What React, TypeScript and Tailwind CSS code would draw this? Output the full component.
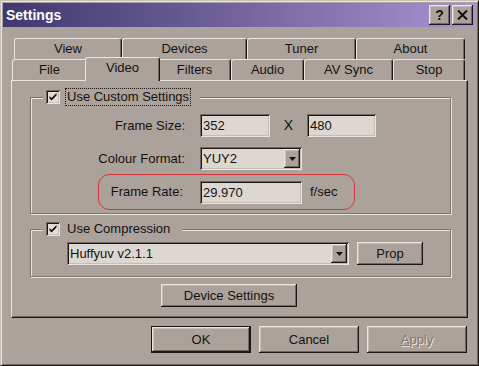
const raised =
  'shadow-[inset_-1px_-1px_0_#1c1714,inset_1px_1px_0_#ece6e0,inset_-2px_-2px_0_#706961,inset_2px_2px_0_#c4bdb6]';
const sunken =
  'shadow-[inset_1px_1px_0_#706961,inset_-1px_-1px_0_#ece6e0,inset_2px_2px_0_#1c1714,inset_-2px_-2px_0_#c4bdb6]';

function Tab({ label, w, sel }: { label: string; w: string; sel?: boolean }) {
  if (sel) {
    return (
      <div
        className={`${w} relative z-10 -mx-[2px] -mt-[2px] -mb-[1px] h-[24px] pb-[3px] flex items-center justify-center bg-[#aba39b] border-t border-l border-r border-t-[#ece6e0] border-l-[#ece6e0] border-r-[#1c1714] rounded-t-[3px] shadow-[inset_-1px_0_0_#706961]`}
      >
        {label}
      </div>
    );
  }
  return (
    <div
      className={`${w} h-[21px] flex items-center justify-center bg-[#aba39b] border-t border-l border-r border-t-[#ece6e0] border-l-[#ece6e0] border-r-[#1c1714] rounded-t-[3px] shadow-[inset_-1px_0_0_#706961]`}
    >
      {label}
    </div>
  );
}

function Check() {
  return (
    <div className={`w-[14px] h-[14px] bg-[#e2dcd6] ${sunken} flex items-center justify-center`}>
      <svg width="14" height="14" viewBox="0 0 14 14">
        <path d="M3.5 6 L3.5 8.5 L5.5 10.5 L10.5 5.5 L10.5 3 L5.5 8 Z" fill="#111" />
      </svg>
    </div>
  );
}

function Field({ w, value }: { w: string; value: string }) {
  return (
    <div className={`${w} h-[23px] bg-[#ddd7d1] ${sunken} flex items-center pl-[3px] pt-[1px]`}>{value}</div>
  );
}

function Combo({ w, value }: { w: string; value: string }) {
  return (
    <div className={`${w} h-[23px] bg-[#ddd7d1] ${sunken} flex items-center pl-[3px] pr-[2px]`}>
      <span className="flex-1 pt-[1px]">{value}</span>
      <div className={`w-[16px] h-[19px] bg-[#aba39b] ${raised} flex items-center justify-center`}>
        <svg width="7" height="4" viewBox="0 0 7 4">
          <polygon points="0,0 7,0 3.5,4" fill="#111" />
        </svg>
      </div>
    </div>
  );
}

export default function App() {
  return (
    <div className="w-[479px] h-[366px] bg-[#aba39b] border border-[#c8c1ba] border-r-[#1c1714] border-b-[#1c1714] shadow-[inset_1px_1px_0_#ece6e0,inset_-1px_-1px_0_#706961] p-[2px] font-['Liberation_Sans',Arial,sans-serif] text-[13px] text-[#141210] overflow-hidden">
      <div className="h-[24px] flex items-center bg-gradient-to-r from-[#42386e] to-[#a893d2] pl-[3px] pr-[3px]">
        <span className="flex-1 text-white font-bold text-[14px]">Settings</span>
        <div className={`w-[21px] h-[20px] bg-[#aba39b] ${raised} flex items-center justify-center font-bold text-[14px] leading-none`}>
          ?
        </div>
        <div className={`ml-[2px] w-[21px] h-[20px] bg-[#aba39b] ${raised} flex items-center justify-center`}>
          <svg width="11" height="10" viewBox="0 0 11 10">
            <path d="M1 0.5 L10 9.5 M10 0.5 L1 9.5" stroke="#111" strokeWidth="2" />
          </svg>
        </div>
      </div>

      <div className="mt-[11px] ml-[11px] flex">
        <Tab label="View" w="w-[108px]" />
        <Tab label="Devices" w="w-[125px]" />
        <Tab label="Tuner" w="w-[109px]" />
        <Tab label="About" w="w-[109px]" />
      </div>
      <div className="ml-[9px] flex items-start">
        <Tab label="File" w="w-[75px]" />
        <Tab label="Video" w="w-[75px]" sel />
        <Tab label="Filters" w="w-[73px]" />
        <Tab label="Audio" w="w-[73px]" />
        <Tab label="AV Sync" w="w-[89px]" />
        <Tab label="Stop" w="w-[72px]" />
      </div>

      <div className="ml-[8px] w-[457px] h-[238px] border border-[#ece6e0] border-r-[#1c1714] border-b-[#1c1714] shadow-[inset_-1px_-1px_0_#706961] pt-[7px]">
        <fieldset className="ml-[18px] w-[421px] border border-[#7d756e] shadow-[inset_1px_1px_0_#ece6e0,1px_1px_0_#ece6e0] pb-[3px]">
          <legend className="ml-[12px] pl-[3px] pr-[9px] bg-[#aba39b]">
            <div className="flex items-center h-[18px]">
              <Check />
              <span className="ml-[5px] h-[18px] leading-[16px] px-[1px] border border-dotted border-[#1c1714]">
                Use Custom Settings
              </span>
            </div>
          </legend>
          <div className="mt-[8px] h-[23px] flex items-center">
            <span className="w-[154px] text-right">Frame Size:</span>
            <div className="ml-[15px]">
              <Field w="w-[70px]" value="352" />
            </div>
            <span className="w-[37px] text-center text-[14px]">X</span>
            <Field w="w-[69px]" value="480" />
          </div>
          <div className="mt-[10px] h-[23px] flex items-center">
            <span className="w-[154px] text-right">Colour Format:</span>
            <div className="ml-[15px]">
              <Combo w="w-[102px]" value="YUY2" />
            </div>
          </div>
          <div className="mt-[4px] ml-[67px] w-[257px] h-[36px] border border-[#d8343c] rounded-[11px] flex items-center">
            <span className="w-[84px] text-right">Frame Rate:</span>
            <div className="ml-[17px]">
              <Field w="w-[102px]" value="29.970" />
            </div>
            <span className="ml-[8px]">f/sec</span>
          </div>
        </fieldset>

        <fieldset className="mt-[6px] ml-[18px] w-[421px] border border-[#7d756e] shadow-[inset_1px_1px_0_#ece6e0,1px_1px_0_#ece6e0] pb-[11px]">
          <legend className="ml-[12px] pl-[3px] pr-[10px] bg-[#aba39b]">
            <div className="flex items-center h-[18px]">
              <Check />
              <span className="ml-[5px] h-[18px] leading-[16px] px-[1px] border border-transparent">
                Use Compression
              </span>
            </div>
          </legend>
          <div className="mt-[4px] h-[23px] flex items-center">
            <div className="ml-[36px]">
              <Combo w="w-[282px]" value="Huffyuv v2.1.1" />
            </div>
            <div className={`ml-[8px] w-[66px] h-[23px] bg-[#aba39b] ${raised} flex items-center justify-center`}>
              Prop
            </div>
          </div>
        </fieldset>

        <div className={`mt-[7px] ml-[149px] w-[136px] h-[23px] bg-[#aba39b] ${raised} flex items-center justify-center`}>
          Device Settings
        </div>
      </div>

      <div className="mt-[8px] ml-[148px] flex gap-[8px]">
        <div className="w-[100px] h-[27px] border border-[#1c1714]">
          <div className={`w-full h-full ${raised} flex items-center justify-center`}>OK</div>
        </div>
        <div className={`w-[100px] h-[27px] ${raised} flex items-center justify-center`}>Cancel</div>
        <div
          className={`w-[100px] h-[27px] ${raised} flex items-center justify-center text-[#7e766e] [text-shadow:1px_1px_0_#ece6e0]`}
        >
          <span>
            <span className="underline">A</span>pply
          </span>
        </div>
      </div>
    </div>
  );
}
